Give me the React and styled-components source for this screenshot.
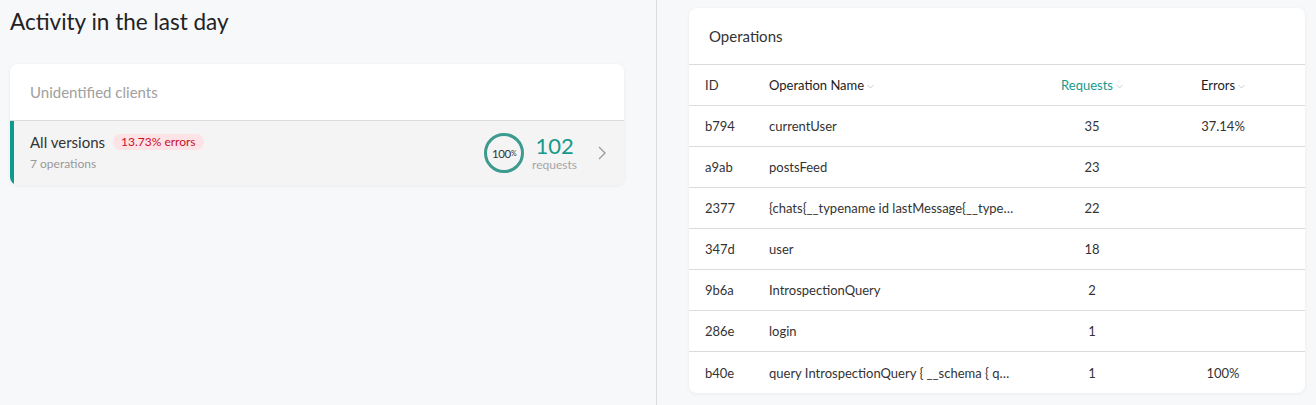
import React from "react";
import styled, { createGlobalStyle } from "styled-components";

const Global = createGlobalStyle`
  html, body { margin: 0; padding: 0; }
  body {
    background: #f7f8fa;
    font-family: Lato, "Open Sans", sans-serif;
    color: #333;
  }
`;

const Page = styled.div`
  display: flex;
  width: 1316px;
  height: 405px;
  background: #f7f8fa;
  overflow: hidden;
`;

const LeftPane = styled.div`
  width: 657px;
  border-right: 1px solid #dcdde0;
  padding: 8px 32px 0 10px;
  box-sizing: border-box;
`;

const RightPane = styled.div`
  flex: 1;
  padding: 8px 11px 0 32px;
  box-sizing: border-box;
`;

const Title = styled.h1`
  margin: 0;
  font-size: 22.5px;
  font-weight: 400;
  line-height: 28px;
  color: #222;
`;

const Card = styled.div`
  background: #fff;
  border-radius: 8px;
  box-shadow: 0 1px 4px rgba(0, 0, 0, 0.06);
  overflow: hidden;
  margin-top: ${(p) => p.$mt || 0}px;
`;

const CardHeader = styled.div`
  height: ${(p) => p.$h}px;
  display: flex;
  align-items: center;
  padding-left: ${(p) => p.$pl}px;
  font-size: 15px;
  color: ${(p) => p.$color};
  border-bottom: 1px solid #dcdcdc;
  box-sizing: border-box;
`;

const ClientRow = styled.div`
  display: flex;
  align-items: center;
  height: 64px;
  background: #f4f4f4;
  border-left: 4px solid #0e9a8c;
  padding: 0 18px 0 16px;
`;

const ClientInfo = styled.div`
  flex: 1;
  display: flex;
  flex-direction: column;
  gap: 5px;
  margin-top: -2px;
`;

const ClientTop = styled.div`
  display: flex;
  align-items: center;
  gap: 8px;
`;

const ClientName = styled.span`
  font-size: 15px;
  color: #333;
`;

const Badge = styled.span`
  font-size: 12px;
  color: #c8102e;
  background: #fde3e5;
  border-radius: 9px;
  padding: 1px 8px;
  line-height: 14px;
`;

const SubText = styled.span`
  font-size: 12px;
  color: #999;
`;

const Ring = styled.div`
  width: 40px;
  height: 40px;
  box-sizing: border-box;
  border: 3px solid #3d9a8f;
  border-radius: 50%;
  display: flex;
  align-items: center;
  justify-content: center;
  font-size: 11.5px;
  color: #333;
  letter-spacing: -0.3px;
`;

const Pct = styled.span`
  font-size: 7px;
`;

const Stat = styled.div`
  display: flex;
  flex-direction: column;
  align-items: center;
  margin-left: 8px;
  margin-right: 21px;
`;

const StatNum = styled.span`
  font-size: 22px;
  color: #14998c;
  line-height: 24px;
`;

const StatLabel = styled.span`
  font-size: 12px;
  color: #a5a5a5;
  line-height: 14px;
`;

const Chevron = styled.svg`
  width: 8px;
  height: 14px;
`;

const Grid = styled.div`
  display: grid;
  grid-template-columns: 64px 265px 116px 146px;
  padding-left: 16px;
  height: ${(p) => p.$h}px;
  align-items: center;
  border-bottom: ${(p) => (p.$last ? "none" : "1px solid #dcdcdc")};
  box-sizing: border-box;
  font-size: 13px;
  color: #333;
`;

const Cell = styled.div`
  text-align: ${(p) => p.$align || "left"};
  white-space: nowrap;
  color: ${(p) => p.$color || "#333"};
`;

const Caret = styled.svg`
  width: 7px;
  height: 5px;
  margin-left: 3px;
  vertical-align: middle;
`;

const SortCaret = () => (
  <Caret viewBox="0 0 7 5">
    <path d="M0.5 1 L3.5 4 L6.5 1" fill="none" stroke="#c8c8c8" strokeWidth="0.9" />
  </Caret>
);

const rows = [
  ["b794", "currentUser", "35", "37.14%"],
  ["a9ab", "postsFeed", "23", ""],
  ["2377", "{chats{__typename id lastMessage{__type…", "22", ""],
  ["347d", "user", "18", ""],
  ["9b6a", "IntrospectionQuery", "2", ""],
  ["286e", "login", "1", ""],
  ["b40e", "query IntrospectionQuery { __schema { q…", "1", "100%"],
];

export default function App() {
  return (
    <Page>
      <Global />
      <LeftPane>
        <Title>Activity in the last day</Title>
        <Card $mt={28}>
          <CardHeader $h={57} $pl={20} $color="#a0a0a0">
            Unidentified clients
          </CardHeader>
          <ClientRow>
            <ClientInfo>
              <ClientTop>
                <ClientName>All versions</ClientName>
                <Badge>13.73% errors</Badge>
              </ClientTop>
              <SubText>7 operations</SubText>
            </ClientInfo>
            <Ring>
              100<Pct>%</Pct>
            </Ring>
            <Stat>
              <StatNum>102</StatNum>
              <StatLabel>requests</StatLabel>
            </Stat>
            <Chevron viewBox="0 0 8 14">
              <path d="M1 1 L7 7 L1 13" fill="none" stroke="#9a9a9a" strokeWidth="1.3" />
            </Chevron>
          </ClientRow>
        </Card>
      </LeftPane>
      <RightPane>
        <Card>
          <CardHeader $h={57} $pl={20} $color="#333">
            Operations
          </CardHeader>
          <Grid $h={41}>
            <Cell>ID</Cell>
            <Cell $color="#222">
              Operation Name
              <SortCaret />
            </Cell>
            <Cell $align="center" $color="#1a9a8c">
              Requests
              <SortCaret />
            </Cell>
            <Cell $align="center" $color="#222">
              Errors
              <SortCaret />
            </Cell>
          </Grid>
          {rows.map((r, i) => (
            <Grid key={r[0]} $h={41} $last={i === rows.length - 1}>
              <Cell>{r[0]}</Cell>
              <Cell>{r[1]}</Cell>
              <Cell $align="center">{r[2]}</Cell>
              <Cell $align="center">{r[3]}</Cell>
            </Grid>
          ))}
        </Card>
      </RightPane>
    </Page>
  );
}
